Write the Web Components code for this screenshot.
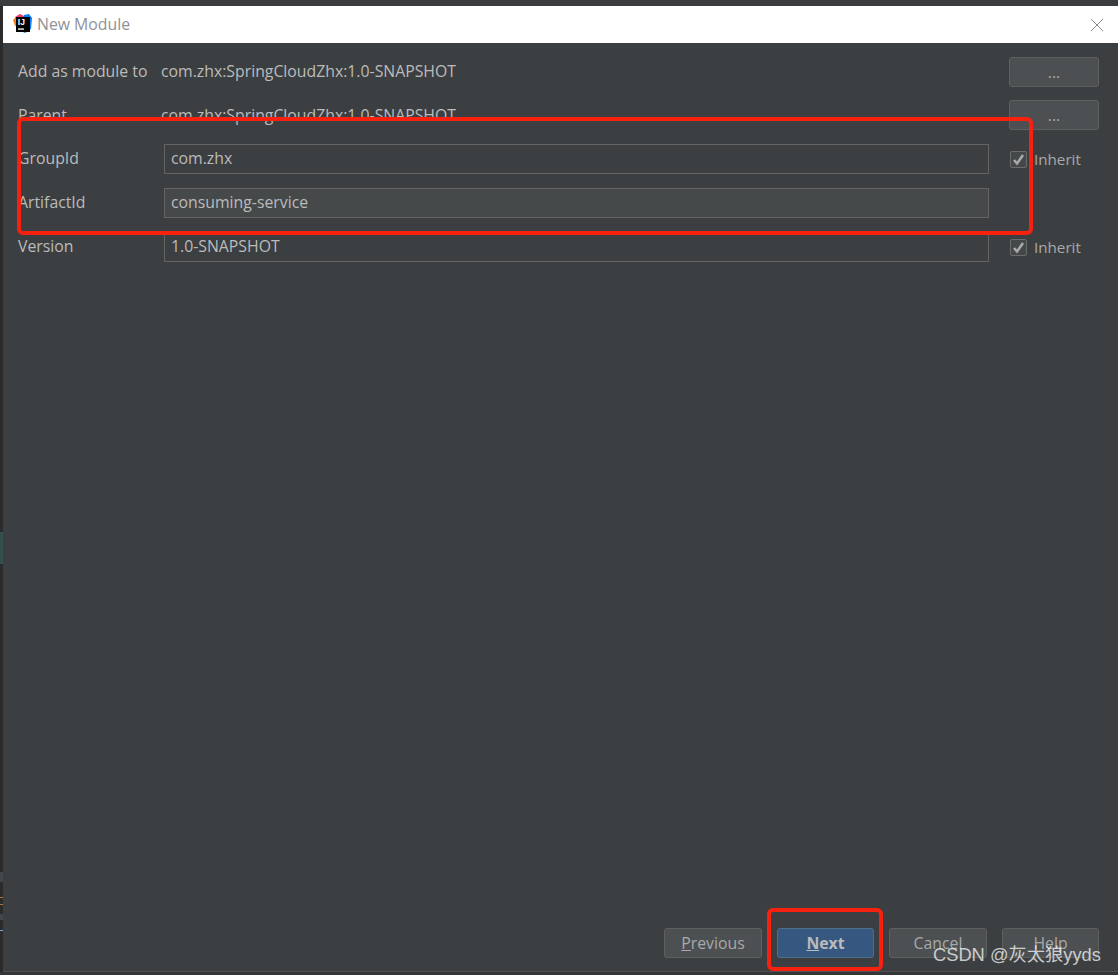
<!DOCTYPE html>
<html>
<head>
<meta charset="utf-8">
<title>New Module</title>
<style>
  html, body { margin: 0; height: 100%; overflow: hidden; }
  body { background: #2b2b2b; font-family: "Open Sans", "Noto Sans", sans-serif; font-size: 15.8px; color: #bbbbbb; }
</style>
</head>
<body>

<ide-desktop>
  <module-dialog heading="New Module">
    <form-row label="Add as module to" plain value="com.zhx:SpringCloudZhx:1.0-SNAPSHOT"><ide-button slot="end" wide>...</ide-button></form-row>
    <form-row label="Parent" plain value="com.zhx:SpringCloudZhx:1.0-SNAPSHOT" style="margin-top:-1px;--text-shift:0px"><ide-button slot="end" wide>...</ide-button></form-row>
    <form-row label="GroupId" value="com.zhx"><ide-check slot="end">Inherit</ide-check></form-row>
    <form-row label="ArtifactId" value="consuming-service" filled></form-row>
    <form-row label="Version" value="1.0-SNAPSHOT"><ide-check slot="end">Inherit</ide-check></form-row>

    <ide-button slot="footer" long><u>P</u>revious</ide-button>
    <ide-button slot="footer" primary><u>N</u>ext</ide-button>
    <ide-button slot="footer" long>Cancel</ide-button>
    <ide-button slot="footer">Help</ide-button>
  </module-dialog>
  <red-mark style="left:17px;top:117px;width:1016px;height:118px"></red-mark>
  <red-mark style="left:767px;top:908px;width:116px;height:63px"></red-mark>
  <water-mark>CSDN @灰太狼yyds</water-mark>
</ide-desktop>

<script>
// window behind the dialog, only a sliver of it shows on the left
class IdeDesktop extends HTMLElement {
  constructor() {
    super();
    this.attachShadow({ mode: 'open' }).innerHTML = `
      <style>
        :host { display: flex; position: relative; width: 1118px; height: 975px; box-sizing: border-box; padding-top: 6px; padding-bottom: 3px; background: linear-gradient(#3a3c3e 6px, #2b2b2b 6px, #2b2b2b 972px, #343638 972px); }
        .strip { width: 3px; flex: none; position: relative; }
        .strip i { position: absolute; left: 0; width: 3px; }
        .main { flex: 1; display: flex; min-width: 0; }
        ::slotted(module-dialog) { flex: 1; }
      </style>
      <div class="strip">
        <i style="top:526px;height:32px;background:#34504d"></i>
        <i style="top:866px;height:10px;background:#45484a"></i>
        <i style="top:891px;height:1px;background:#a8783c"></i>
        <i style="top:898px;height:1px;background:#a8783c"></i>
        <i style="top:908px;height:6px;background:#45484a"></i>
        <i style="top:924px;height:1px;background:#7aa5d8"></i>
      </div>
      <div class="main"><slot></slot></div>
    `;
  }
}

class ModuleDialog extends HTMLElement {
  constructor() {
    super();
    const heading = this.getAttribute('heading');
    this.attachShadow({ mode: 'open' }).innerHTML = `
      <style>
        :host { display: flex; flex-direction: column; background: #3c3f41; border-bottom: 1px solid #515151; }
        .title { display: flex; align-items: center; height: 37px; flex: none; background: #fff; padding: 0 14px 0 10px; color: #8f9296; font-size: 15.8px; }
        .title svg.logo { width: 19px; height: 19px; margin: -2px 5px 0 0; }
        .title span { flex: 1; margin-top: -2px; }
        .form { display: flex; flex-direction: column; gap: 14px; padding: 14px 19px 0 15px; flex: 1; }
        .footer { display: flex; justify-content: flex-end; gap: 15px; padding: 0 19px 13px 0; }
        .footer ::slotted(ide-button) { width: 97px; }
        .footer ::slotted(ide-button[long]) { width: 98px; }
      </style>
      <div class="title">
        <svg class="logo" viewBox="0 0 19 19">
          <path d="M2 3 L7 0 L11 2 L10 14 L3 12 Z" fill="#f0386b"/>
          <path d="M0 6 L3 3 L5 12 L2 12 Z" fill="#fc801d"/>
          <path d="M11 1 L16 0 L19 4 L18 15 L12 19 L8 17 Z" fill="#087cfa"/>
          <rect x="3" y="3" width="14" height="15" fill="#000"/>
          <text x="4.8" y="11" font-family="Liberation Sans, sans-serif" font-size="8.5" font-weight="700" fill="#fff">IJ</text>
          <rect x="5" y="14.4" width="6" height="1.3" fill="#fff"/>
        </svg>
        <span>${heading}</span>
        <svg width="14" height="14" viewBox="0 0 14 14"><path d="M1 1 L13 13 M13 1 L1 13" stroke="#8a8a8a" stroke-width="1" fill="none"/></svg>
      </div>
      <div class="form"><slot></slot></div>
      <div class="footer"><slot name="footer"></slot></div>
    `;
  }
}

class FormRow extends HTMLElement {
  constructor() {
    super();
    const plain = this.hasAttribute('plain');
    const value = this.getAttribute('value');
    this.attachShadow({ mode: 'open' }).innerHTML = `
      <style>
        :host { display: grid; grid-template-columns: 146px 825px 1fr; height: 30px; align-items: center; color: #bbbbbb; }
        .label { margin-top: var(--text-shift, -2px); white-space: nowrap; }
        .input { box-sizing: border-box; height: 30px; line-height: 26px; border: 1px solid #646464; background: ${this.hasAttribute('filled') ? '#45494a' : '#3c3f41'}; padding-left: 6px; }
        .plain { padding-left: 0; margin: var(--text-shift, -2px) 0 0 -3px; }
        .end { padding-left: 20px; display: flex; align-items: center; }
      </style>
      <div class="label">${this.getAttribute('label')}</div>
      <div class="${plain ? 'plain' : 'input'}">${value}</div>
      <div class="end"><slot name="end"></slot></div>
    `;
  }
}

class IdeButton extends HTMLElement {
  constructor() {
    super();
    this.attachShadow({ mode: 'open' }).innerHTML = `
      <style>
        :host { display: flex; box-sizing: border-box; height: 30px; align-items: center; justify-content: center; background: #4c5052; border: 1px solid #5e6060; border-radius: 3px; color: #a9a9a9; }
        :host([wide]) { width: 90px; }
        :host([primary]) { background: #365880; border-color: #4c708c; color: #bbbbbb; font-weight: 700; }
      </style>
      <slot></slot>
    `;
  }
}

class IdeCheck extends HTMLElement {
  constructor() {
    super();
    this.attachShadow({ mode: 'open' }).innerHTML = `
      <style>
        :host { display: inline-flex; align-items: center; gap: 7px; color: #a9a9a9; margin-left: 1px; font-size: 15.2px; }
        .box { box-sizing: border-box; width: 17px; height: 17px; border: 1px solid #6b6b6b; border-radius: 2px; background: #43494a; display: flex; align-items: center; justify-content: center; }
      </style>
      <span class="box"><svg width="13" height="13" viewBox="0 0 13 13"><path d="M2 7 L5 10.5 L11 2" stroke="#a9a9a9" stroke-width="2.6" fill="none"/></svg></span>
      <slot></slot>
    `;
  }
}

// annotation boxes drawn over the screenshot
class RedMark extends HTMLElement {
  constructor() {
    super();
    this.attachShadow({ mode: 'open' }).innerHTML = `
      <style>
        :host { display: block; position: absolute; box-sizing: border-box; border: 4px solid #f8200f; border-radius: 6px; }
      </style>
    `;
  }
}

class WaterMark extends HTMLElement {
  constructor() {
    super();
    this.attachShadow({ mode: 'open' }).innerHTML = `
      <style>
        :host { display: block; position: absolute; left: 933px; top: 943px; font: 18.3px/24px "Liberation Sans", "Noto Sans CJK SC", sans-serif; color: rgba(255,255,255,.72); white-space: nowrap; }
      </style>
      <slot></slot>
    `;
  }
}

customElements.define('ide-desktop', IdeDesktop);
customElements.define('module-dialog', ModuleDialog);
customElements.define('form-row', FormRow);
customElements.define('ide-button', IdeButton);
customElements.define('ide-check', IdeCheck);
customElements.define('red-mark', RedMark);
customElements.define('water-mark', WaterMark);
</script>
</body>
</html>
